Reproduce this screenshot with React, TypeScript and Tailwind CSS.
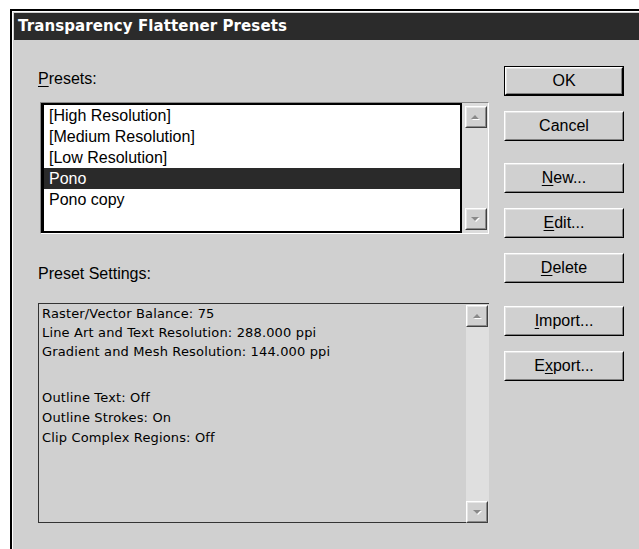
import React from "react";

/* ── Data ─────────────────────────────────────────────────────── */

const PRESETS = [
  "[High Resolution]",
  "[Medium Resolution]",
  "[Low Resolution]",
  "Pono",
  "Pono copy",
];

const SETTINGS_TOP = [
  "Raster/Vector Balance: 75",
  "Line Art and Text Resolution: 288.000 ppi",
  "Gradient and Mesh Resolution: 144.000 ppi",
];

const SETTINGS_BOTTOM = [
  "Outline Text: Off",
  "Outline Strokes: On",
  "Clip Complex Regions: Off",
];

/* ── Bits ─────────────────────────────────────────────────────── */

function Arrow({ down = false }: { down?: boolean }) {
  return (
    <svg width="11" height="7" viewBox="0 0 11 7">
      {down ? (
        <>
          <polygon points="2,2 10,2 6,6" fill="#ffffff" />
          <polygon points="1,1 9,1 5,5" fill="#8a8a8a" />
        </>
      ) : (
        <>
          <polygon points="6,2 10,6 2,6" fill="#ffffff" />
          <polygon points="5,1 9,5 1,5" fill="#8a8a8a" />
        </>
      )}
    </svg>
  );
}

function ScrollButton({ down = false }: { down?: boolean }) {
  return (
    <div className="w-[22px] h-[22px] border border-t-white border-l-white border-r-[#404040] border-b-[#404040] bg-[#d0d0d0]">
      <div className="w-full h-full flex items-center justify-center border border-t-[#e6e6e6] border-l-[#e6e6e6] border-r-[#8a8a8a] border-b-[#8a8a8a]">
        <Arrow down={down} />
      </div>
    </div>
  );
}

function Btn({
  pre = "",
  u = "",
  post = "",
  isDefault = false,
  className = "",
}: {
  pre?: string;
  u?: string;
  post?: string;
  isDefault?: boolean;
  className?: string;
}) {
  const face = (
    <div className="w-full h-full border border-t-white border-l-white border-r-black border-b-black">
      <div className="w-full h-full flex items-center justify-center border border-t-[#e4e4e4] border-l-[#e4e4e4] border-r-[#808080] border-b-[#808080] text-[16px] text-black">
        <span>
          {pre}
          {u && <span className="underline underline-offset-2">{u}</span>}
          {post}
        </span>
      </div>
    </div>
  );
  return (
    <div
      className={`w-[120px] h-[30px] ${isDefault ? "border border-black" : ""} ${className}`}
    >
      {face}
    </div>
  );
}

/* ── Dialog ───────────────────────────────────────────────────── */

export default function App() {
  return (
    <div className="w-[639px] h-[549px] overflow-hidden bg-white pt-[9px] pl-[10px] font-['Liberation_Sans',Arial,sans-serif]">
      <div className="w-[660px] h-[570px] border-2 border-black bg-[#d0d0d0]">
        <div className="w-full h-full border-t border-l border-white pt-[1px] pl-[1px]">
          {/* Title bar */}
          <div className="h-[27px] bg-[#2b2b2b] flex items-center pl-[4px]">
            <span className="text-white font-bold text-[15px] tracking-[0.1px] font-['DejaVu_Sans',Verdana,sans-serif]">
              Transparency Flattener Presets
            </span>
          </div>

          <div className="flex pl-[24px]">
            {/* Left column */}
            <div className="w-[451px] flex flex-col">
              <div className="mt-[29px] h-[20px] leading-[20px] text-[16px] text-black">
                <span className="underline underline-offset-2">P</span>resets:
              </div>

              {/* Presets list */}
              <div className="ml-[2px] mt-[13px] w-[449px] h-[132px] flex border border-t-[#8a8a8a] border-l-[#8a8a8a] border-r-white border-b-white">
                <div className="flex-1 border-2 border-black border-l-[3px] bg-white">
                  {PRESETS.map((p, i) => (
                    <div
                      key={p}
                      className={`h-[21px] leading-[21px] pl-[5px] text-[16px] ${
                        i === 3 ? "bg-[#2a2a2a] text-white" : "text-black"
                      }`}
                    >
                      {p}
                    </div>
                  ))}
                </div>
                <div className="w-[26px] bg-[#dcdcdc] flex flex-col justify-between items-center py-[3px] pl-[1px]">
                  <ScrollButton />
                  <ScrollButton down />
                </div>
              </div>

              <div className="mt-[30px] h-[20px] leading-[20px] text-[16px] text-black">
                Preset Settings:
              </div>

              {/* Settings readout */}
              <div className="mt-[19px] w-[451px] h-[220px] flex border-t border-l border-b border-[#333333]">
                <div className="flex-1 pl-[3px] text-[13px] tracking-[0.15px] text-black font-['DejaVu_Sans',Verdana,sans-serif]">
                  {SETTINGS_TOP.map((s) => (
                    <div key={s} className="h-[19px] leading-[19px]">
                      {s}
                    </div>
                  ))}
                  <div className="h-[27px]" />
                  {SETTINGS_BOTTOM.map((s) => (
                    <div key={s} className="h-[20px] leading-[20px]">
                      {s}
                    </div>
                  ))}
                </div>
                <div className="w-[23px] bg-[#dfdfdf] flex flex-col justify-between mt-[1px] mb-[-1px]">
                  <ScrollButton />
                  <ScrollButton down />
                </div>
              </div>
            </div>

            {/* Buttons */}
            <div className="ml-[15px] flex flex-col">
              <Btn pre="OK" isDefault className="mt-[26px]" />
              <Btn pre="Cancel" className="mt-[15px]" />
              <Btn u="N" post="ew..." className="mt-[22px]" />
              <Btn u="E" post="dit..." className="mt-[15px]" />
              <Btn u="D" post="elete" className="mt-[15px]" />
              <Btn u="I" post="mport..." className="mt-[23px]" />
              <Btn pre="E" u="x" post="port..." className="mt-[15px]" />
            </div>
          </div>
        </div>
      </div>
    </div>
  );
}
